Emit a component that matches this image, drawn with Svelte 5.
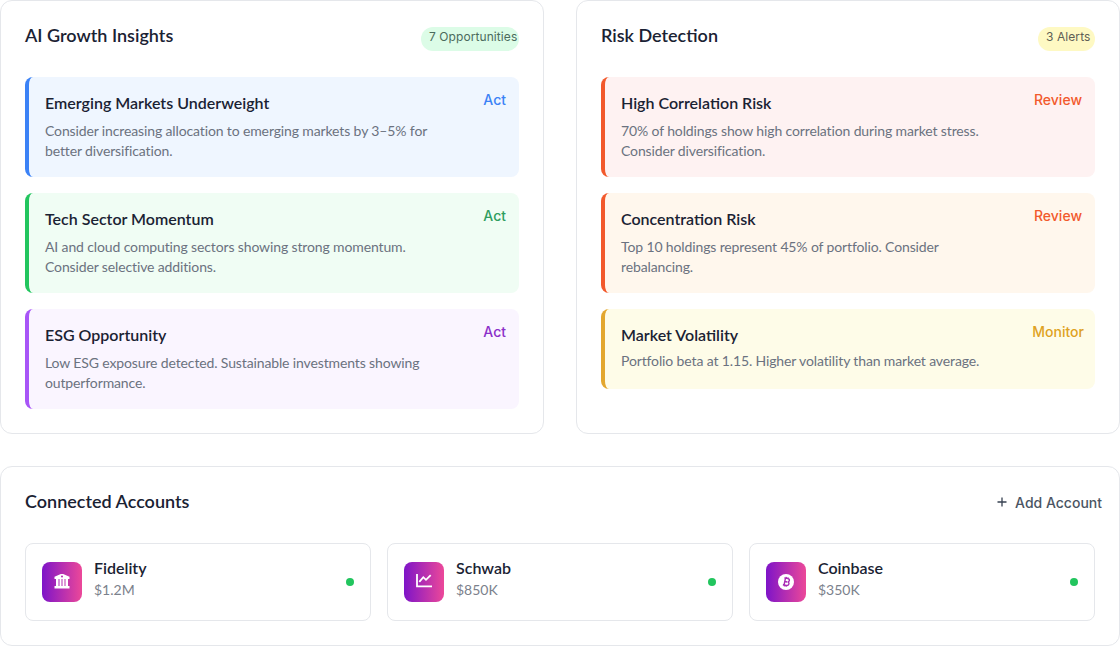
<script>
  const insights = [
    { title: "Emerging Markets Underweight", text: "Consider increasing allocation to emerging markets by 3–5% for better diversification.", action: "Act", tone: "blue" },
    { title: "Tech Sector Momentum", text: "AI and cloud computing sectors showing strong momentum. Consider selective additions.", action: "Act", tone: "green" },
    { title: "ESG Opportunity", text: "Low ESG exposure detected. Sustainable investments showing outperformance.", action: "Act", tone: "purple" }
  ];
  const risks = [
    { title: "High Correlation Risk", text: "70% of holdings show high correlation during market stress. Consider diversification.", action: "Review", tone: "red" },
    { title: "Concentration Risk", text: "Top 10 holdings represent 45% of portfolio. Consider rebalancing.", action: "Review", tone: "orange" },
    { title: "Market Volatility", text: "Portfolio beta at 1.15. Higher volatility than market average.", action: "Monitor", tone: "yellow" }
  ];
  const accounts = [
    { name: "Fidelity", value: "$1.2M", icon: "bank" },
    { name: "Schwab", value: "$850K", icon: "chart" },
    { name: "Coinbase", value: "$350K", icon: "coin" }
  ];
</script>

{#snippet item(row)}
  <div class="item {row.tone}">
    <div>
      <h3>{row.title}</h3>
      <p>{row.text}</p>
    </div>
    <span class="action">{row.action}</span>
  </div>
{/snippet}

<div class="page">
  <div class="top">
    <section class="panel">
      <header>
        <h2>AI Growth Insights</h2>
        <span class="badge opp">7 Opportunities</span>
      </header>
      <div class="list">
        {#each insights as row}{@render item(row)}{/each}
      </div>
    </section>
    <section class="panel">
      <header>
        <h2>Risk Detection</h2>
        <span class="badge alerts">3 Alerts</span>
      </header>
      <div class="list">
        {#each risks as row}{@render item(row)}{/each}
      </div>
    </section>
  </div>

  <section class="panel">
    <header>
      <h2>Connected Accounts</h2>
      <span class="add">
        <svg width="14" height="14" viewBox="0 0 14 14"><path d="M7 2.500v9M2.500 7h9" stroke="#374151" stroke-width="1.300" /></svg>
        Add Account
      </span>
    </header>
    <div class="accounts">
      {#each accounts as acc}
        <div class="account">
          <div class="icon">
            {#if acc.icon === "bank"}
              <svg width="16" height="16" viewBox="0 1 16 16" fill="#fff">
                <path fill-rule="evenodd" d="M8 0.500 15.500 3.700V6H0.500V3.700ZM8 2.600a.9.9 0 1 0 .01 0Z" />
                <path d="M2 6h2.500v7H2zM5.500 6h2v7h-2zM8.500 6h2v7h-2zM11.500 6h2.500v7h-2.500z" />
                <path d="M0.500 13h15v2.500h-15z" />
              </svg>
            {:else if acc.icon === "chart"}
              <svg width="16" height="16" viewBox="0 0 16 16" fill="none" stroke="#fff">
                <path d="M1 0v12.300h15.500" stroke-width="1.800" />
                <path d="M3.300 7.800 7.300 3.200l2.700 2.600 4.700-4.600" stroke-width="1.800" />
              </svg>
            {:else}
              <svg width="16" height="16" viewBox="0 0 16 16">
                <circle cx="8" cy="8" r="8" fill="#fff" />
                <g transform="rotate(12 8 8)">
                  <path d="M5.500 4.300h3.700c1.200 0 1.800.6 1.800 1.700 0 .8-.5 1.400-1.200 1.600.9.200 1.500.8 1.500 1.700 0 1.200-.8 2-2.200 2H5.500M6.700 4.300v7M6.700 7.800h2.500M7.300 3v1.300M9.100 3v1.300M7.300 11.300v1.300M9.100 11.300v1.300" fill="none" stroke="#a92bb5" stroke-width="1.400" />
                </g>
              </svg>
            {/if}
          </div>
          <div class="info">
            <div class="name">{acc.name}</div>
            <div class="value">{acc.value}</div>
          </div>
          <span class="dot"></span>
        </div>
      {/each}
    </div>
  </section>
</div>

<style>
  :global(body) {
    margin: 0;
    background: #fff;
  }
  .page {
    width: 1120px;
    display: flex;
    flex-direction: column;
    gap: 32px;
    font-family: "Lato", sans-serif;
    color: #111827;
  }
  .top {
    display: grid;
    grid-template-columns: 1fr 1fr;
    gap: 32px;
  }
  .panel {
    box-sizing: border-box;
    background: #fff;
    border: 1px solid #e5e7eb;
    border-radius: 12px;
    padding: 24px;
  }
  header {
    display: flex;
    justify-content: space-between;
    align-items: center;
    height: 28px;
    margin-bottom: 24px;
  }
  h2 {
    margin: 0 0 8px;
    font-size: 18px;
    line-height: 22px;
    font-weight: 600;
    color: #1a2233;
  }
  .badge {
    box-sizing: border-box;
    height: 24px;
    padding-left: 8px;
    border-radius: 12px;
    font-family: "Inter", sans-serif;
    font-size: 12px;
    line-height: 19px;
    letter-spacing: 0.08px;
    white-space: nowrap;
  }
  .opp {
    width: 98px;
    background: #dcfce7;
    color: #4b6b5c;
  }
  .alerts {
    width: 57px;
    background: #fef9c3;
    color: #5f5f55;
  }
  .list {
    display: flex;
    flex-direction: column;
    gap: 16px;
  }
  .item {
    display: flex;
    justify-content: space-between;
    align-items: flex-start;
    padding: 16px 13px 16px 16px;
    border-left: 4px solid;
    border-radius: 8px;
  }
  h3 {
    margin: 0 0 8px;
    font-size: 16px;
    line-height: 20px;
    font-weight: 600;
    color: #1a2233;
  }
  .item p {
    margin: 0;
    max-width: 384px;
    font-size: 14px;
    line-height: 20px;
    letter-spacing: -0.13px;
    color: #6b7280;
  }
  .item.yellow p {
    margin: -2px 0 2px;
  }
  .action {
    font-family: "Inter", sans-serif;
    font-size: 14px;
    line-height: 14px;
    font-weight: 500;
  }
  .blue { background: #eff6ff; border-color: #3b82f6; }
  .blue .action { color: #3b82f6; }
  .green { background: #f0fdf4; border-color: #22c55e; }
  .green .action { color: #2f9e5f; }
  .purple { background: #faf5ff; border-color: #a855f7; }
  .purple .action { color: #8b2fc9; }
  .red { background: #fef2f2; border-color: #f2592c; }
  .red .action { color: #f2592c; }
  .orange { background: #fff7ed; border-color: #f2592c; }
  .orange .action { color: #f2592c; }
  .yellow { background: #fefce8; border-color: #e3a72f; }
  .yellow .action { color: #dfa222; margin-right: -2px; }
  .add {
    display: flex;
    align-items: center;
    gap: 6px;
    margin: -6px -7px 0 0;
    font-family: "Inter", sans-serif;
    font-size: 14px;
    font-weight: 500;
    color: #4b5563;
    white-space: nowrap;
  }
  .accounts {
    display: grid;
    grid-template-columns: repeat(3, 1fr);
    gap: 16px;
  }
  .account {
    display: flex;
    align-items: center;
    gap: 12px;
    padding: 16px;
    border: 1px solid #e5e7eb;
    border-radius: 8px;
  }
  .icon {
    width: 40px;
    height: 40px;
    flex-shrink: 0;
    display: flex;
    align-items: center;
    justify-content: center;
    border-radius: 8px;
    background: linear-gradient(90deg, #7e14c8, #ec4899);
  }
  .info {
    flex: 1;
    min-height: 44px;
  }
  .name {
    margin-bottom: 4px;
    font-size: 16px;
    line-height: 16px;
    font-weight: 600;
    color: #1a2233;
  }
  .value {
    font-size: 14px;
    line-height: 20px;
    color: #7b818c;
  }
  .dot {
    width: 8px;
    height: 8px;
    border-radius: 50%;
    background: #22c55e;
  }
</style>
